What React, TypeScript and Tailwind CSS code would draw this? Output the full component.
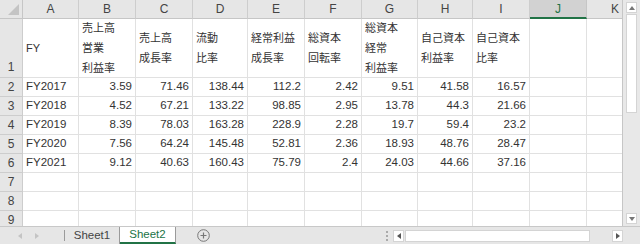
const cols = ["A", "B", "C", "D", "E", "F", "G", "H", "I", "J", "K"];

const labels: string[][] = [
  ["FY"],
  ["売上高", "営業", "利益率"],
  ["売上高", "成長率"],
  ["流動", "比率"],
  ["経常利益", "成長率"],
  ["総資本", "回転率"],
  ["総資本", "経常", "利益率"],
  ["自己資本", "利益率"],
  ["自己資本", "比率"],
  [],
  [],
];

const rows: [string, string[]][] = [
  ["FY2017", ["3.59", "71.46", "138.44", "112.2", "2.42", "9.51", "41.58", "16.57"]],
  ["FY2018", ["4.52", "67.21", "133.22", "98.85", "2.95", "13.78", "44.3", "21.66"]],
  ["FY2019", ["8.39", "78.03", "163.28", "228.9", "2.28", "19.7", "59.4", "23.2"]],
  ["FY2020", ["7.56", "64.24", "145.48", "52.81", "2.36", "18.93", "48.76", "28.47"]],
  ["FY2021", ["9.12", "40.63", "160.43", "75.79", "2.4", "24.03", "44.66", "37.16"]],
];

const cell = "border-r border-b border-[#e1e1e1] overflow-hidden whitespace-nowrap";
const rowHead =
  "flex justify-center bg-[#e6e6e6] border-r border-b border-[#cdcdcd] text-[12px] text-[#444]";

function Tri({ dir, color = "#777" }: { dir: "up" | "down" | "left" | "right"; color?: string }) {
  const pts = {
    up: "0,5 3,1 6,5",
    down: "0,1 3,5 6,1",
    left: "5,0 1,3 5,6",
    right: "1,0 5,3 1,6",
  }[dir];
  return (
    <svg width="6" height="6" viewBox="0 0 6 6">
      <polygon points={pts} fill={color} />
    </svg>
  );
}

function Grid() {
  return (
    <div className="w-[623px] h-[226px] overflow-hidden border-r border-[#c6c6c6]">
      <div className="grid grid-cols-[23px_56px_57px_57px_55px_57px_57px_56px_55px_57px_57px_57px] grid-rows-[19px_59px_19px_19px_19px_19px_19px_19px_19px_19px] w-[646px]">
        {/* header row */}
        <div className="relative bg-[#e6e6e6] border-r border-b border-[#c6c6c6]">
          <svg className="absolute right-[3px] bottom-[3px]" width="11" height="11" viewBox="0 0 11 11">
            <polygon points="11,0 11,11 0,11" fill="#c4c4c4" />
          </svg>
        </div>
        {cols.map((c) =>
          c === "J" ? (
            <div
              key={c}
              className="flex items-center justify-center bg-[#d2d2d2] border-r border-[#c6c6c6] border-b-2 border-b-[#217346] text-[12px] text-[#217346]"
            >
              {c}
            </div>
          ) : (
            <div
              key={c}
              className="flex items-center justify-center bg-[#e6e6e6] border-r border-b border-[#cdcdcd] border-b-[#c6c6c6] text-[12px] text-[#444]"
            >
              {c}
            </div>
          )
        )}

        {/* row 1 */}
        <div className={`${rowHead} items-end pb-[1px]`}>1</div>
        {labels.map((l, i) => (
          <div key={i} className={`${cell} flex flex-col justify-center px-[3px] text-[11px] leading-[20px] text-[#333]`}>
            {l.map((t) => (
              <span key={t}>{t}</span>
            ))}
          </div>
        ))}

        {/* data rows */}
        {rows.map(([fy, vals], r) => (
          <Row key={fy} n={r + 2} first={fy} vals={vals} />
        ))}
        {[7, 8, 9].map((n) => (
          <Row key={n} n={n} first="" vals={["", "", "", "", "", "", "", ""]} />
        ))}
      </div>
    </div>
  );
}

function Row({ n, first, vals }: { n: number; first: string; vals: string[] }) {
  return (
    <>
      <div className={`${rowHead} items-center`}>{n}</div>
      <div className={`${cell} flex items-center px-[3px] text-[11.5px] text-[#333]`}>{first}</div>
      {vals.map((v, i) => (
        <div key={i} className={`${cell} flex items-center justify-end px-[3px] text-[11.5px] text-[#333]`}>
          {v}
        </div>
      ))}
      <div className={cell} />
      <div className={cell} />
    </>
  );
}

function VScroll() {
  return (
    <div className="w-[17px] h-[226px] bg-[#e8e8e8] flex flex-col items-center pt-[2px] pb-[2px]">
      <div className="w-[11px] h-[11px] bg-white border border-[#d4d4d4] flex items-center justify-center">
        <Tri dir="up" />
      </div>
      <div className="w-[11px] h-[99px] bg-white border border-[#d4d4d4] mt-[1px]" />
      <div className="flex-1" />
      <div className="w-[11px] h-[11px] bg-white border border-[#d4d4d4] flex items-center justify-center">
        <Tri dir="down" />
      </div>
    </div>
  );
}

function TabBar() {
  return (
    <div className="flex h-[18px] bg-[#e6e6e6] border-t border-[#c8c8c8] text-[11.5px]">
      <div className="w-[64px] flex items-center gap-[11px] pl-[17px]">
        <Tri dir="left" color="#c4c4c4" />
        <Tri dir="right" color="#c4c4c4" />
      </div>
      <div className="w-px h-[11px] mt-[3px] bg-[#9a9a9a]" />
      <div className="w-[55px] flex items-center justify-center text-[#444] border-r border-[#9a9a9a]">
        Sheet1
      </div>
      <div className="w-[56px] flex items-center justify-center bg-white text-[#217346] border-r border-[#9a9a9a] border-b-2 border-b-[#217346]">
        Sheet2
      </div>
      <div className="w-[54px] flex items-center justify-center">
        <svg width="13" height="13" viewBox="0 0 13 13">
          <circle cx="6.5" cy="6.5" r="5.8" fill="none" stroke="#777" strokeWidth="1" />
          <path d="M6.5 3.5v6M3.5 6.5h6" stroke="#777" strokeWidth="1.2" />
        </svg>
      </div>
      <div className="flex-1" />
      <div className="w-[11px] flex flex-col items-center justify-center gap-[2px]">
        <span className="w-[2px] h-[2px] bg-[#aaa]" />
        <span className="w-[2px] h-[2px] bg-[#aaa]" />
        <span className="w-[2px] h-[2px] bg-[#aaa]" />
      </div>
      <div className="w-[230px] flex items-center ml-[1px]">
        <div className="w-[11px] h-[12px] bg-white border border-[#d4d4d4] flex items-center justify-center">
          <Tri dir="left" color="#555" />
        </div>
        <div className="w-[185px] h-[12px] bg-white border border-[#d4d4d4] ml-[1px]" />
        <div className="flex-1" />
        <div className="w-[11px] h-[12px] bg-white border border-[#d4d4d4] flex items-center justify-center">
          <Tri dir="right" color="#555" />
        </div>
      </div>
      <div className="w-[17px]" />
    </div>
  );
}

export default function App() {
  return (
    <div
      className="w-[640px] h-[244px] overflow-hidden bg-white"
      style={{ fontFamily: '"Liberation Sans", "Noto Sans CJK JP", sans-serif' }}
    >
      <div className="flex">
        <Grid />
        <VScroll />
      </div>
      <TabBar />
    </div>
  );
}
